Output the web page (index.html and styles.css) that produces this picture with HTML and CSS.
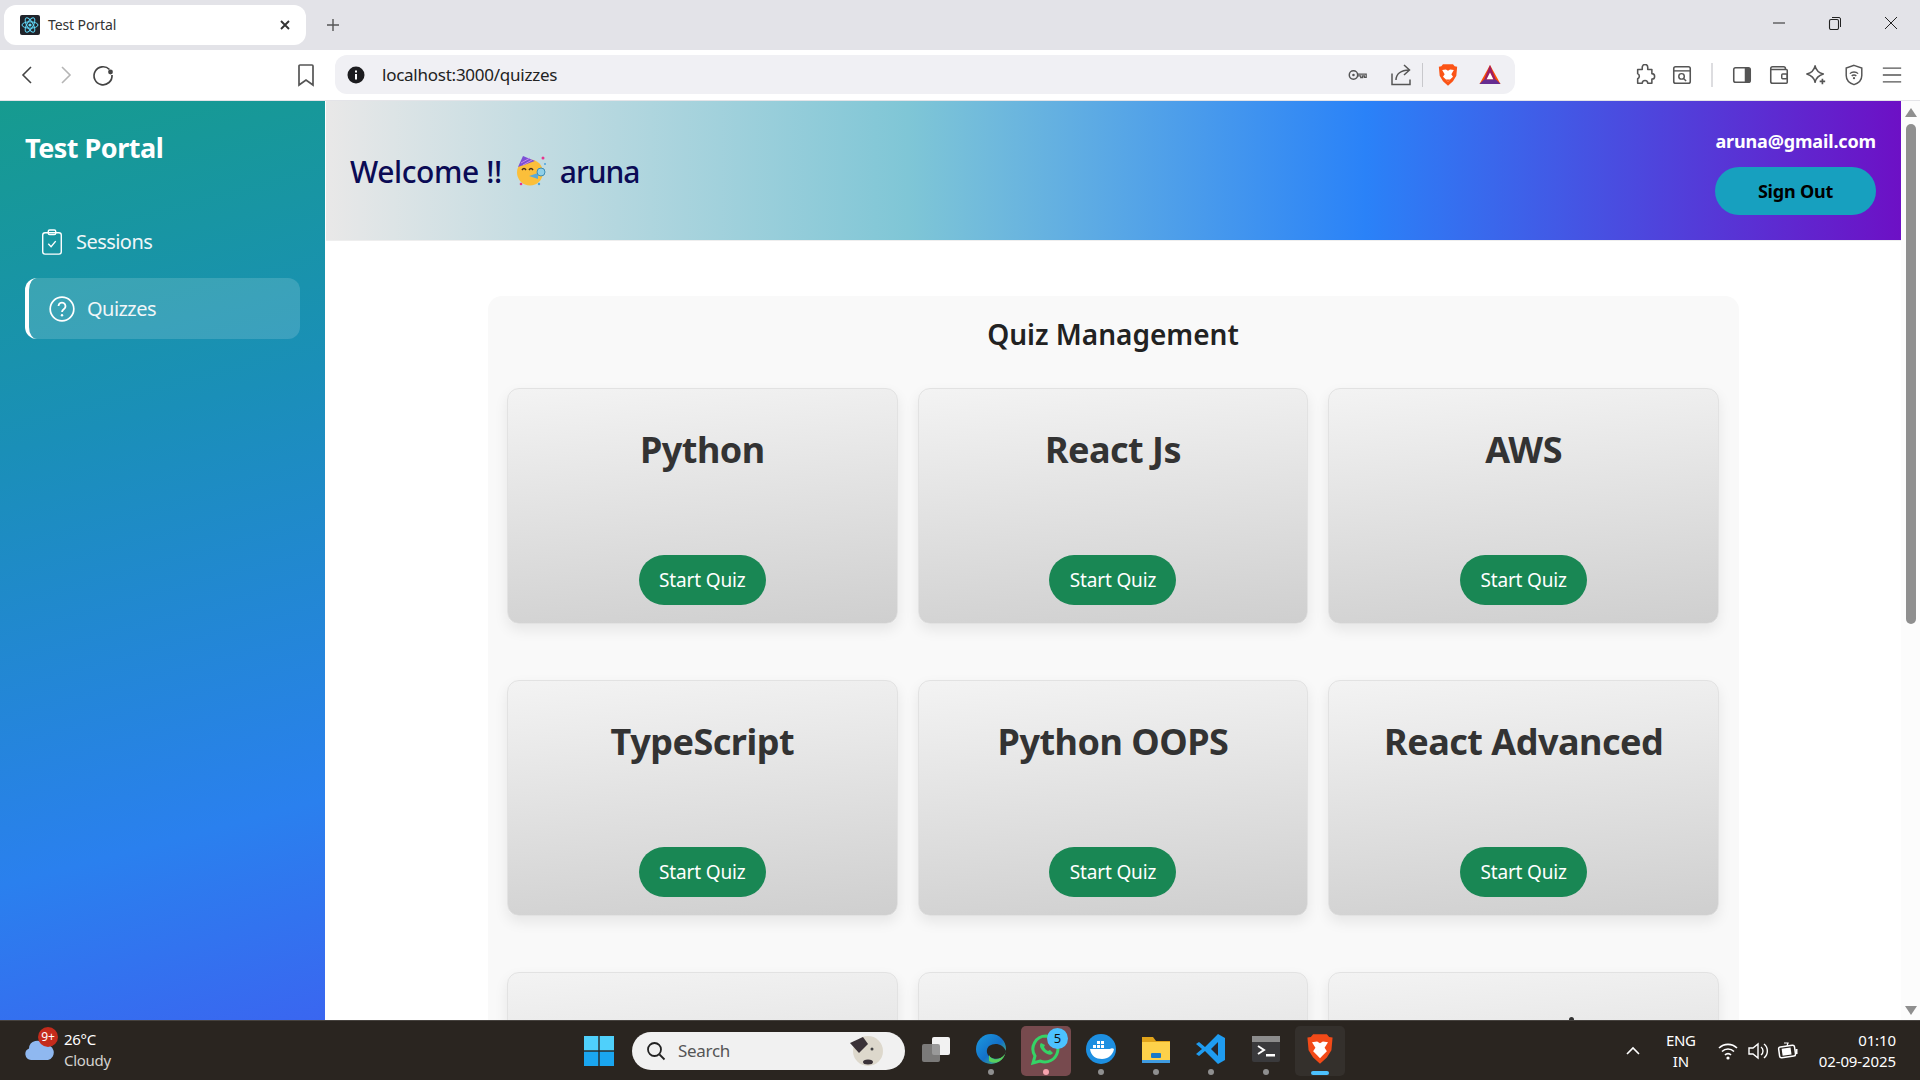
FILE: index.html
```html
<!DOCTYPE html>
<html lang="en">
<head>
<meta charset="utf-8">
<title>Test Portal</title>
<link rel="stylesheet" href="styles.css">
</head>
<body>
<div class="screen">
  <div class="tabstrip">
    <div class="tab">
      <svg class="favicon" viewBox="0 0 20 20"><rect width="20" height="20" rx="2" fill="#20232a"/><g fill="none" stroke="#61dafb" stroke-width="1"><ellipse cx="10" cy="10" rx="8" ry="3.2"/><ellipse cx="10" cy="10" rx="8" ry="3.2" transform="rotate(60 10 10)"/><ellipse cx="10" cy="10" rx="8" ry="3.2" transform="rotate(120 10 10)"/></g><circle cx="10" cy="10" r="1.6" fill="#61dafb"/></svg>
      <span class="tab-title">Test Portal</span>
      <svg class="tab-close" viewBox="0 0 12 12"><path d="M2 2l8 8M10 2l-8 8" stroke="#333" stroke-width="1.9" fill="none"/></svg>
    </div>
    <svg class="newtab" viewBox="0 0 14 14"><path d="M7 1v12M1 7h12" stroke="#555" stroke-width="1.4"/></svg>
    <div class="win-controls">
      <svg class="win-btn" viewBox="0 0 14 14"><path d="M1 7h12" stroke="#222" stroke-width="1"/></svg>
      <svg class="win-btn" viewBox="0 0 14 14"><rect x="1.5" y="3.5" width="9" height="10" rx="1.5" fill="none" stroke="#222" stroke-width="1.1"/><path d="M4 1.5h7a1.5 1.5 0 0 1 1.5 1.5v8" fill="none" stroke="#222" stroke-width="1"/></svg>
      <svg class="win-btn" viewBox="0 0 14 14"><path d="M1 1l12 12M13 1L1 13" stroke="#222" stroke-width="1"/></svg>
    </div>
  </div>

  <div class="toolbar">
    <svg class="tb-icon tb-back" viewBox="0 0 20 20"><path d="M13 2L5 10l8 8" fill="none" stroke="#444" stroke-width="1.6"/></svg>
    <svg class="tb-icon tb-forward" viewBox="0 0 20 20"><path d="M7 2l8 8-8 8" fill="none" stroke="#b5b5b5" stroke-width="1.6"/></svg>
    <svg class="tb-icon tb-reload" viewBox="0 0 24 24"><path d="M18.5 6.5A9 9 0 1 0 21 12" fill="none" stroke="#444" stroke-width="1.7"/><circle cx="19.5" cy="9" r="2.4" fill="#444"/></svg>
    <svg class="tb-icon tb-bookmark" viewBox="0 0 20 24"><path d="M4 2h12a1 1 0 0 1 1 1v19l-7-5-7 5V3a1 1 0 0 1 1-1z" fill="none" stroke="#555" stroke-width="1.7"/></svg>
    <div class="omnibox">
      <svg class="info" viewBox="0 0 18 18"><circle cx="9" cy="9" r="8.5" fill="#1c1c1f"/><rect x="8" y="8" width="2" height="5.5" fill="#fff"/><rect x="8" y="4.5" width="2" height="2" fill="#fff"/></svg>
      <span class="url">localhost:3000/quizzes</span>
      <svg class="omni-key" viewBox="0 0 22 14"><circle cx="6" cy="7" r="4.6" fill="none" stroke="#555" stroke-width="1.6"/><circle cx="6" cy="7" r="1.4" fill="#555"/><path d="M10.5 6h9.5v3.5h-2V8h-2v2h-2V8h-3.5" fill="none" stroke="#555" stroke-width="1.4"/></svg>
      <svg class="omni-share" viewBox="0 0 22 22"><path d="M2 9.500v11h18v-5M6 16c0-6 5-10 13-10M14 1l5.500 5-5.500 5" fill="none" stroke="#555" stroke-width="1.5"/></svg>
      <span class="omni-sep"></span>
      <svg class="omni-brave" viewBox="0 0 24 28"><path d="M6 1h12l2 2.500 3 .5-1 11-4 6.500L12 27l-6-5.500L2 15 1 4l3-.5z" fill="#fb5416"/><path d="M5 8l4.500-.5L12 9l2.500-1.500L19 8l-3 5 2 3-3.500 3.500L12 22l-2.500-2.500L6 16l2-3z" fill="#fff"/><path d="M9.500 19.500h5L12 22z" fill="#fb5416"/></svg>
      <svg class="omni-bat" viewBox="0 0 24 22"><path d="M12 1L1 21h22z" fill="#ff5000"/><path d="M1 21h22l-5-5H6z" fill="#662d91"/><path d="M12 1L6 16h12z" fill="#9e1f63"/><path d="M12 9l-3.500 7h7z" fill="#fff"/></svg>
    </div>
    <div class="ext-row">
      <svg class="ext" viewBox="0 0 24 24"><path d="M9 3.500a3 3 0 0 1 6 0V6h4.500v4.500a3 3 0 0 1 0 6V21H15a3 3 0 0 0-6 0H4v-5a3 3 0 0 0 0-5.500V6h5z" fill="none" stroke="#555" stroke-width="1.7" stroke-linejoin="round"/></svg>
      <svg class="ext" viewBox="0 0 24 24"><rect x="3" y="3" width="18" height="18" rx="2" fill="none" stroke="#555" stroke-width="1.7"/><path d="M3 7.500h18" stroke="#555" stroke-width="1.5"/><circle cx="11.500" cy="13.500" r="3" fill="none" stroke="#555" stroke-width="1.6"/><path d="M14 16l2.500 2.500" stroke="#555" stroke-width="1.6"/></svg>
      <span class="ext-sep"></span>
      <svg class="ext" viewBox="0 0 24 24"><rect x="3" y="4" width="18" height="16" rx="2" fill="none" stroke="#555" stroke-width="1.7"/><path d="M15 4h4a2 2 0 0 1 2 2v12a2 2 0 0 1-2 2h-4z" fill="#555"/></svg>
      <svg class="ext" viewBox="0 0 24 24"><path d="M19 6V5a2 2 0 0 0-2-2H5a2 2 0 0 0-2 2v14a2 2 0 0 0 2 2h15a1 1 0 0 0 1-1V7a1 1 0 0 0-1-1H3" fill="none" stroke="#555" stroke-width="1.7"/><rect x="15" y="11" width="6" height="5" rx="1" fill="none" stroke="#555" stroke-width="1.6"/></svg>
      <svg class="ext" viewBox="0 0 24 24"><path d="M11 2c1 5 4 7.500 9 9-5 1.500-8 4-9 9-1-5-4-7.500-9-9 5-1.500 8-4 9-9z" fill="none" stroke="#555" stroke-width="1.7" stroke-linejoin="round"/><path d="M19 16v6M16 19h6" stroke="#555" stroke-width="1.8"/></svg>
      <svg class="ext ext-shift" viewBox="0 0 24 24"><path d="M12 1.500l8.500 3v8c0 5-4 8.500-8.500 10-4.500-1.500-8.500-5-8.500-10v-8z" fill="none" stroke="#555" stroke-width="1.6"/><path d="M7.500 10.500a6.500 6.500 0 0 1 9 0M9.500 13a3.500 3.500 0 0 1 5 0" fill="none" stroke="#555" stroke-width="1.5"/><circle cx="12" cy="15.500" r="1.200" fill="#555"/></svg>
      <svg class="ext ext-shift" viewBox="0 0 24 24"><path d="M2 4.500h20M2 12h20M2 19.500h20" stroke="#555" stroke-width="1.6"/></svg>
    </div>
  </div>

  <div class="app">
    <aside class="sidebar">
      <h1 class="brand">Test Portal</h1>
      <nav class="nav">
        <div class="nav-item">
          <svg class="nav-icon" viewBox="0 0 24 28"><rect x="2" y="4" width="20" height="23" rx="2.500" fill="none" stroke="#fff" stroke-width="1.500"/><rect x="8" y="1" width="8" height="5" rx="1.500" fill="none" stroke="#fff" stroke-width="1.500"/><path d="M8 16l3 3 5-6" fill="none" stroke="#fff" stroke-width="1.500"/></svg>
          <span>Sessions</span>
        </div>
        <div class="nav-item nav-active">
          <svg class="nav-icon-q" viewBox="0 0 26 26"><circle cx="13" cy="13" r="11.800" fill="none" stroke="#fff" stroke-width="1.700"/><path d="M9.500 10a3.500 3.500 0 1 1 5.500 3c-1.300.9-2 1.500-2 3" fill="none" stroke="#fff" stroke-width="1.800"/><circle cx="13" cy="19.200" r="1.200" fill="#fff"/></svg>
          <span>Quizzes</span>
        </div>
      </nav>
    </aside>

    <div class="content">
      <header class="topbar">
        <div class="welcome">
          <span>Welcome !!</span>
          <svg class="party" viewBox="0 0 32 32">
            <circle cx="15" cy="17.500" r="13" fill="#fbbf3a"/>
            <path d="M3 12L8 1l12 5z" fill="#7b4fd6"/>
            <path d="M6 8l9-5M8 10l9-5" stroke="#c58be8" stroke-width="1"/>
            <path d="M7 15q2-3 4 0M14 15q2-3 4 0" fill="none" stroke="#4a2f14" stroke-width="1.500"/>
            <path d="M14 21l9-3v6z" fill="#5aa9d6"/>
            <circle cx="26" cy="17" r="4" fill="#8fd0e8" stroke="#3d8db5"/>
            <circle cx="28" cy="3" r="1.500" fill="#e8368f"/><circle cx="6" cy="29" r="1.300" fill="#e8368f"/><circle cx="24" cy="29" r="1.200" fill="#4aa3df"/><circle cx="30" cy="9" r="1" fill="#4aa3df"/>
          </svg>
          <span class="user">aruna</span>
        </div>
        <div class="account">
          <div class="email">aruna@gmail.com</div>
          <button class="signout">Sign Out</button>
        </div>
      </header>
      <main class="main">
        <section class="panel">
          <h2 class="panel-title">Quiz Management</h2>
          <div class="grid">
            <article class="card"><h3>Python</h3><button class="start">Start Quiz</button></article>
            <article class="card"><h3>React Js</h3><button class="start">Start Quiz</button></article>
            <article class="card"><h3>AWS</h3><button class="start">Start Quiz</button></article>
            <article class="card"><h3>TypeScript</h3><button class="start">Start Quiz</button></article>
            <article class="card"><h3>Python OOPS</h3><button class="start">Start Quiz</button></article>
            <article class="card"><h3>React Advanced</h3><button class="start">Start Quiz</button></article>
            <article class="card"></article>
            <article class="card"></article>
            <article class="card"><span class="title-tip"></span></article>
          </div>
        </section>
      </main>
    </div>
    <div class="scrollbar">
      <span class="sb-up"></span>
      <span class="sb-thumb"></span>
      <span class="sb-fill"></span>
      <span class="sb-down"></span>
    </div>
  </div>

  <footer class="taskbar">
    <div class="weather">
      <svg class="cloud" viewBox="0 0 32 26"><path d="M8 24a6 6 0 0 1-2-11.500A8 8 0 0 1 21 9a6.500 6.500 0 0 1 4 15z" fill="#8fb8f0"/></svg>
      <span class="badge">9+</span>
      <div class="weather-text"><span>26°C</span><span class="dim">Cloudy</span></div>
    </div>
    <div class="tray-center">
      <svg class="winlogo" viewBox="0 0 30 30"><rect width="14.300" height="14.300" fill="#4fd0fb"/><rect x="15.700" width="14.300" height="14.300" fill="#4fd0fb"/><rect y="15.700" width="14.300" height="14.300" fill="#1aa6f0"/><rect x="15.700" y="15.700" width="14.300" height="14.300" fill="#1aa6f0"/></svg>
      <div class="searchbox">
        <svg class="search-ic" viewBox="0 0 20 20"><circle cx="8.500" cy="8.500" r="6.500" fill="none" stroke="#222" stroke-width="1.800"/><path d="M13.500 13.500l5 5" stroke="#222" stroke-width="1.800"/></svg>
        <span class="search-text">Search</span>
        <svg class="search-art" viewBox="0 0 36 32"><ellipse cx="20" cy="16" rx="15" ry="15" fill="#ddd8cc"/><path d="M2 8l13-6 5 7-9 9z" fill="#3a3238"/><circle cx="24" cy="14" r="1.500" fill="#444"/><ellipse cx="20" cy="27" rx="5" ry="2.500" fill="#3a3238"/></svg>
      </div>
      <div class="apps">
        <div class="app-btn">
          <svg class="taskview" viewBox="0 0 30 26"><rect x="11" y="1" width="18" height="18" rx="2" fill="#f2f2f2"/><rect x="1" y="8" width="18" height="18" rx="2" fill="#8a8a8a" fill-opacity=".85"/></svg>
        </div>
        <div class="app-btn">
          <svg class="app-ic" viewBox="0 0 32 32"><defs><linearGradient id="edgeGrad" x1="0" y1="0" x2="1" y2="1"><stop offset="0" stop-color="#1b9be0"/><stop offset=".55" stop-color="#1470c8"/><stop offset="1" stop-color="#58d05e"/></linearGradient></defs><circle cx="16" cy="16" r="15" fill="url(#edgeGrad)"/><path d="M31 18c-3-7-11-9-17-5-3 3-3 8 1 11 5 3 10 2 14-1-1 1 2-2 2-5z" fill="#2a2520"/><path d="M14 22c3 6 11 6 16-1-2 7-10 11-16 7z" fill="#58d05e"/></svg>
          <i class="dot"></i>
        </div>
        <div class="app-btn app-wa">
          <svg class="app-ic" viewBox="0 0 32 32"><path d="M16 3a13 13 0 0 0-11 20L3 30l7-2A13 13 0 1 0 16 3z" fill="none" stroke="#35d366" stroke-width="3"/><path d="M11 10c-2 2-1 6 3 9s7 4 9 1l-3-3-2 1c-2-1-3-2-4-4l1-2z" fill="#35d366"/></svg>
          <span class="wa-badge">5</span>
          <i class="dot dot-pink"></i>
        </div>
        <div class="app-btn">
          <svg class="app-ic" viewBox="0 0 32 32"><circle cx="16" cy="16" r="15" fill="#1d8fe1"/><path d="M5 16h20c1-1 3-1 4 0-1 6-6 10-12 10-6 0-11-3-12-10z" fill="#fff"/><g fill="#fff"><rect x="8" y="12" width="3" height="3"/><rect x="12" y="12" width="3" height="3"/><rect x="16" y="12" width="3" height="3"/><rect x="12" y="8" width="3" height="3"/><rect x="16" y="8" width="3" height="3"/></g></svg>
          <i class="dot"></i>
        </div>
        <div class="app-btn">
          <svg class="app-ic" viewBox="0 0 32 32"><path d="M2 4h11l3 4h14v22H2z" fill="#e0a31a"/><rect x="2" y="9" width="28" height="21" fill="#fdd14a"/><rect x="2" y="27" width="28" height="3" fill="#3f9be0"/><rect x="11" y="20" width="10" height="5" rx="1" fill="#1778c9"/></svg>
          <i class="dot"></i>
        </div>
        <div class="app-btn">
          <svg class="app-ic" viewBox="0 0 32 32"><path d="M23 1l7 4v22l-7 4L10 18l-6 5-3-2 6-5-6-5 3-2 6 5z" fill="#1f9cf0"/><path d="M23 9l-7 7 7 7z" fill="#28262a"/></svg>
          <i class="dot"></i>
        </div>
        <div class="app-btn">
          <svg class="app-ic" viewBox="0 0 32 32"><rect x="2" y="3" width="28" height="26" rx="2" fill="#3a3a3c"/><rect x="2" y="3" width="28" height="6" fill="#8c8c8c"/><path d="M8 13l6 4-6 4" fill="none" stroke="#fff" stroke-width="2"/><rect x="16" y="21" width="9" height="2.500" fill="#fff"/></svg>
          <i class="dot"></i>
        </div>
        <div class="app-btn app-brave">
          <svg class="app-ic" viewBox="0 0 24 28"><path d="M6 1h12l2 2.500 3 .5-1 11-4 6.500L12 27l-6-5.500L2 15 1 4l3-.5z" fill="#f24a18"/><path d="M5 8l4.500-.5L12 9l2.500-1.500L19 8l-3 5 2 3-3.500 3.500L12 22l-2.500-2.500L6 16l2-3z" fill="#fff"/></svg>
          <i class="dash"></i>
        </div>
      </div>
    </div>
    <div class="tray-right">
      <svg class="chev" viewBox="0 0 14 10"><path d="M1 8l6-6 6 6" fill="none" stroke="#fff" stroke-width="1.600"/></svg>
      <div class="lang"><span>ENG</span><span>IN</span></div>
      <svg class="sys" viewBox="0 0 22 22"><path d="M2 8a13 13 0 0 1 18 0M5 11.500a8.500 8.500 0 0 1 12 0M8 15a4 4 0 0 1 6 0" fill="none" stroke="#fff" stroke-width="1.600"/><circle cx="11" cy="18" r="1.600" fill="#fff"/></svg>
      <svg class="sys" viewBox="0 0 22 22"><path d="M2 8h4l5-4v14l-5-4H2z" fill="none" stroke="#fff" stroke-width="1.400"/><path d="M14 7a5 5 0 0 1 0 8M17 4a9 9 0 0 1 0 14" fill="none" stroke="#fff" stroke-width="1.400"/></svg>
      <svg class="sys" viewBox="0 0 22 22"><rect x="2" y="6" width="16" height="11" rx="2" fill="none" stroke="#fff" stroke-width="1.500" transform="rotate(-8 10 11)"/><rect x="5" y="8" width="9" height="7" fill="#fff" transform="rotate(-8 10 11)"/><rect x="18.500" y="9" width="2" height="5" fill="#fff"/><path d="M7 3h4l-1 3" fill="none" stroke="#fff" stroke-width="1.200"/></svg>
      <div class="clock"><span>01:10</span><span>02-09-2025</span></div>
    </div>
  </footer>
</div>
</body>
</html>
```

FILE: styles.css
```css
* { box-sizing: border-box; }
html, body { margin: 0; height: 100%; overflow: hidden; }
body { font-family: "Noto Sans", "Open Sans", sans-serif; background: #fff; }
h1, h2, h3 { margin: 0; }
button { font-family: inherit; border: 0; }

.screen { width: 1920px; height: 1080px; display: flex; flex-direction: column; }

/* Browser tab strip */
.tabstrip { height: 50px; flex: none; background: #e3e3e8; display: flex; align-items: flex-start; padding: 5px 0 0 4px; }
.tab { width: 302px; height: 40px; background: #fff; border-radius: 12px; display: flex; align-items: center; padding: 0 15px 1px 16px; }
.favicon { width: 20px; height: 20px; flex: none; }
.tab-title { margin-left: 8px; font-size: 14px; letter-spacing: -0.1px; color: #333; flex: 1; }
.tab-close { width: 12px; height: 12px; }
.newtab { width: 14px; height: 14px; margin: 13px 0 0 20px; }
.win-controls { margin-left: auto; display: flex; gap: 42px; padding: 11px 22px 0 0; }
.win-btn { width: 14px; height: 14px; }

/* Browser toolbar */
.toolbar { height: 51px; flex: none; background: #fff; border-bottom: 1px solid #e4e4e8; display: flex; align-items: center; padding: 0 0 1px 18px; }
.tb-icon { flex: none; }
.tb-back { width: 20px; height: 22px; }
.tb-forward { width: 20px; height: 22px; margin-left: 17px; }
.tb-reload { width: 24px; height: 24px; margin-left: 16px; }
.tb-bookmark { width: 20px; height: 24px; margin-left: 181px; }
.omnibox { width: 1180px; height: 39px; margin-left: 19px; background: #f0f0f4; border-radius: 12px; display: flex; align-items: center; padding: 0 13px 0 12px; }
.info { width: 18px; height: 18px; flex: none; }
.url { margin-left: 17px; font-size: 17px; color: #222; flex: 1; letter-spacing: -0.25px; }
.omni-key { width: 20px; height: 14px; }
.omni-share { width: 22px; height: 22px; margin-left: 22px; }
.omni-sep { width: 1px; height: 24px; background: #c8c8cc; margin-left: 10px; }
.omni-brave { width: 20px; height: 24px; margin-left: 15px; }
.omni-bat { width: 24px; height: 21px; margin-left: 20px; }
.ext-row { display: flex; align-items: center; margin-left: 119px; }
.ext { width: 22px; height: 22px; flex: none; margin-right: 15px; }
.ext-shift { margin-left: 1px; }
.ext-sep { width: 2px; height: 24px; background: #dddde0; margin-right: 18px; margin-left: 3px; }

/* App frame */
.app { flex: 1; min-height: 0; display: flex; }
.sidebar { width: 325px; flex: none; background: linear-gradient(165deg, #169b8f 0%, #1a8fb8 35%, #2a80ee 78%, #3a66f0 100%); padding: 29px 25px 0; color: #fff; }
.brand { font-size: 27px; font-weight: 700; line-height: 36px; letter-spacing: -0.5px; }
.nav { display: flex; flex-direction: column; gap: 7px; margin-top: 45px; }
.nav-item { height: 61px; display: flex; align-items: center; font-size: 20px; color: #f0f6f8; padding-left: 15px; gap: 12px; letter-spacing: -0.55px; }
.nav-icon { width: 24px; height: 26px; flex: none; }
.nav-active { width: 275px; background: rgba(255, 255, 255, 0.15); border-left: 4px solid #fff; border-radius: 12px; padding-left: 20px; gap: 12px; margin-top: -1px; }
.nav-icon-q { width: 26px; height: 26px; flex: none; }

.content { flex: 1; min-width: 0; display: flex; flex-direction: column; margin-left: 1px; }
.topbar { height: 140px; flex: none; background: linear-gradient(90deg, #e9e8e8 0%, #7fc6d6 37%, #2a82f8 66%, #6d10c5 100%); display: flex; align-items: center; justify-content: space-between; padding: 1px 25px 0 24px; border-bottom: 1px solid #eee; }
.welcome { display: flex; align-items: center; gap: 13px; font-size: 30px; font-weight: 500; color: #0b0b55; letter-spacing: -0.4px; }
.user { letter-spacing: -1px; }
.party { width: 32px; height: 32px; }
.account { display: flex; flex-direction: column; align-items: flex-end; gap: 13px; }
.email { font-size: 18px; font-weight: 700; color: #fff; letter-spacing: -0.15px; line-height: 26px; }
.signout { width: 161px; height: 48px; border-radius: 24px; background: #17a0bf; color: #000; font-size: 18px; font-weight: 700; letter-spacing: -0.2px; }

.main { flex: 1; min-height: 0; overflow: hidden; padding: 55px 162px 0 162px; }
.panel { background: #f9f9f9; border-radius: 14px; padding: 18px 20px 40px 19px; }
.panel-title { text-align: center; font-size: 28px; font-weight: 600; line-height: 40px; color: #222; letter-spacing: 0; }
.grid { display: grid; grid-template-columns: repeat(3, 1fr); column-gap: 20px; row-gap: 56px; margin-top: 34px; }
.card { position: relative; height: 236px; border: 1px solid #e2e2e2; border-radius: 12px; background: linear-gradient(175deg, #f3f3f3 0%, #cfcfcf 100%); box-shadow: 0 6px 14px rgba(0, 0, 0, 0.08); display: flex; flex-direction: column; align-items: center; padding: 36px 0 18px; }
.card h3 { font-size: 36px; font-weight: 700; line-height: 50px; color: #333; letter-spacing: -0.5px; }
.start { margin-top: auto; height: 50px; width: 127px; border-radius: 25px; background: #198754; color: #fff; font-size: 19px; letter-spacing: -0.15px; }
.title-tip { position: absolute; left: 240px; top: 44px; width: 5px; height: 5px; border-radius: 50%; background: #333; }

.scrollbar { width: 19px; flex: none; background: #fcfcfc; display: flex; flex-direction: column; align-items: center; padding-top: 7px; }
.sb-up { width: 0; height: 0; border-left: 6px solid transparent; border-right: 6px solid transparent; border-bottom: 9px solid #8f8f8f; }
.sb-thumb { width: 10px; height: 500px; background: #8f8f8f; border-radius: 5px; margin-top: 7px; }
.sb-fill { flex: 1; }
.sb-down { width: 0; height: 0; border-left: 6px solid transparent; border-right: 6px solid transparent; border-top: 9px solid #8f8f8f; margin-bottom: 5px; }

/* Windows taskbar */
.taskbar { height: 60px; flex: none; background: #2a2520; border-top: 1px solid #46423e; display: flex; align-items: center; color: #fff; }
.weather { width: 584px; flex: none; display: flex; align-items: center; padding-left: 23px; position: relative; }
.cloud { width: 32px; height: 26px; margin-top: -4px; }
.badge { position: absolute; left: 38px; top: -4px; width: 20px; height: 20px; border-radius: 50%; background: #c42b1c; font-size: 12px; line-height: 20px; text-align: center; }
.weather-text { display: flex; flex-direction: column; margin: -2px 0 0 9px; font-size: 15px; line-height: 21px; letter-spacing: -0.3px; }
.dim { color: #d4d2cf; }
.tray-center { display: flex; align-items: center; }
.winlogo { width: 30px; height: 30px; flex: none; }
.searchbox { width: 273px; height: 38px; margin-left: 18px; background: #f1f1f1; border-radius: 19px; display: flex; align-items: center; padding: 0 21px 0 14px; color: #555; }
.search-ic { width: 20px; height: 20px; flex: none; }
.search-text { font-size: 17px; margin-left: 12px; flex: 1; letter-spacing: -0.3px; }
.search-art { width: 36px; height: 32px; }
.apps { display: flex; align-items: center; margin-left: 3px; }
.app-btn { position: relative; width: 55px; height: 50px; display: flex; align-items: center; justify-content: center; border-radius: 5px; }
.taskview { width: 30px; height: 26px; margin-bottom: 4px; }
.app-ic { width: 32px; height: 32px; margin-bottom: 4px; }
.app-wa { background: #774a4e; width: 50px; margin: 0 2px 0 3px; }
.app-brave { background: #34302c; width: 50px; margin-left: 2px; }
.dot { position: absolute; bottom: 1px; left: 50%; width: 6px; height: 6px; margin-left: -3px; border-radius: 50%; background: #8f8f8f; }
.dot-pink { background: #f7a3ad; }
.dash { position: absolute; bottom: 1px; left: 50%; width: 18px; height: 4px; margin-left: -9px; border-radius: 2px; background: #4cc2ff; }
.wa-badge { position: absolute; right: 3px; top: 2px; width: 21px; height: 21px; border-radius: 50%; background: #4cc2ff; color: #111; font-size: 13px; line-height: 21px; text-align: center; }
.tray-right { margin-left: auto; display: flex; align-items: center; padding-right: 24px; }
.chev { width: 14px; height: 10px; }
.lang { display: flex; flex-direction: column; align-items: center; margin-left: 26px; font-size: 15px; line-height: 21px; letter-spacing: -0.3px; }
.sys { width: 22px; height: 22px; margin-left: 8px; }
.lang + .sys { margin-left: 21px; }
.clock { display: flex; flex-direction: column; align-items: flex-end; margin-left: 20px; font-size: 15px; line-height: 21px; letter-spacing: -0.1px; }
```
